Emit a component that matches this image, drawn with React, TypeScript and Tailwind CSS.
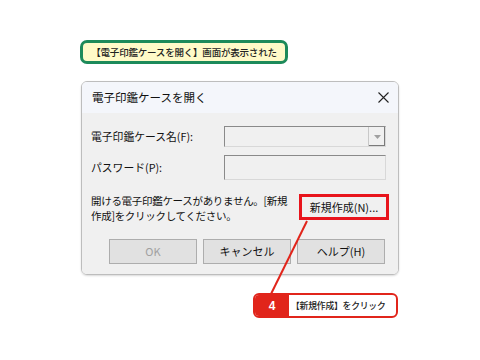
const jp = "font-['Noto_Sans_CJK_JP','Noto_Sans',sans-serif]";

function Field({ combo, h }: { combo?: boolean; h: string }) {
  return (
    <div
      className={`flex w-[162px] ${h} justify-end border border-t-[#8a8a8a] border-l-[#8a8a8a] border-r-[#d8d8d8] border-b-[#d8d8d8] bg-[#f0f0f0]`}
    >
      {combo && (
        <div className="flex w-[17px] items-center justify-center border-l border-[#c8c8c8] bg-[#f0f0f0] shadow-[inset_-1px_-1px_0_#7a7a7a]">
          <svg width="7" height="4" viewBox="0 0 7 4">
            <path d="M0 0h7L3.5 4z" fill="#a0a0a0" />
          </svg>
        </div>
      )}
    </div>
  );
}

function Btn({ label, disabled }: { label: string; disabled?: boolean }) {
  return (
    <div
      className={`flex h-[25px] w-[88px] items-center justify-center border border-[#adadad] bg-[#e1e1e1] text-[11px] ${
        disabled ? "text-[#a0a0a0]" : "text-[#111]"
      }`}
    >
      {label}
    </div>
  );
}

export default function App() {
  return (
    <div className={`relative flex h-[360px] w-[480px] flex-col bg-white pl-[80px] pt-[40px] ${jp}`}>
      {/* callout top */}
      <div className="flex h-[24px] w-[208px] items-center justify-center rounded-[7px] border-[3px] border-[#1d8a5a] bg-[#fffac8] text-[9.5px] font-medium tracking-[-0.2px] text-[#222]">
        【電子印鑑ケースを開く】画面が表示された
      </div>

      {/* dialog */}
      <div className="ml-[1px] mt-[17px] flex h-[194px] w-[318px] flex-col overflow-hidden rounded-[6px] border border-[#bdbdbd] text-[#111] shadow-[0_1px_2px_rgba(0,0,0,0.15)]">
        <div className="flex h-[31px] items-center justify-between bg-[#f4f6fb] pl-[10px] pr-[9px] text-[11.5px]">
          <span>電子印鑑ケースを開く</span>
          <svg width="11" height="11" viewBox="0 0 11 11">
            <path d="M0.5 0.5l10 10M10.5 0.5l-10 10" stroke="#222" strokeWidth="1.1" />
          </svg>
        </div>
        <div className="flex flex-1 flex-col bg-[#f0f0f0] pl-[9px] pt-[13px] text-[10.8px]">
          <div className="flex items-center">
            <span className="w-[133px]">電子印鑑ケース名(F):</span>
            <Field combo h="h-[21px]" />
          </div>
          <div className="mt-[8px] flex items-center">
            <span className="w-[133px]">パスワード(P):</span>
            <Field h="h-[25px]" />
          </div>
          <div className="mt-[13px] flex items-start">
            <p className="w-[205px] text-[10.5px] leading-[15px] tracking-[-0.3px]">
              開ける電子印鑑ケースがありません。[新規
              <br />
              作成]をクリックしてください。
            </p>
            <div className="ml-[3px] mt-[1px] flex h-[26px] w-[90px] items-center justify-center border-[3px] border-[#e8141c] bg-[#f0f0f0] text-[11px]">
              新規作成(N)...
            </div>
          </div>
          <div className="ml-[18px] mt-[16px] flex gap-[6px]">
            <Btn label="OK" disabled />
            <Btn label="キャンセル" />
            <Btn label="ヘルプ(H)" />
          </div>
        </div>
      </div>

      {/* callout bottom */}
      <div className="ml-[173px] mt-[18px] flex h-[25px] w-[145px] overflow-hidden rounded-[6px] border-[2px] border-[#e1251b] bg-white">
        <div className="flex w-[34px] items-center justify-center bg-[#e1251b] text-[12px] font-bold text-white font-['Liberation_Sans',sans-serif]">
          4
        </div>
        <div className="flex flex-1 items-center pl-[2px] text-[8.8px] font-medium tracking-[-0.2px] text-[#222]">
          【新規作成】をクリック
        </div>
      </div>

      {/* leader line */}
      <svg className="pointer-events-none absolute left-0 top-0" width="480" height="360">
        <line x1="307" y1="221" x2="271" y2="294" stroke="#e1251b" strokeWidth="2" />
      </svg>
    </div>
  );
}
